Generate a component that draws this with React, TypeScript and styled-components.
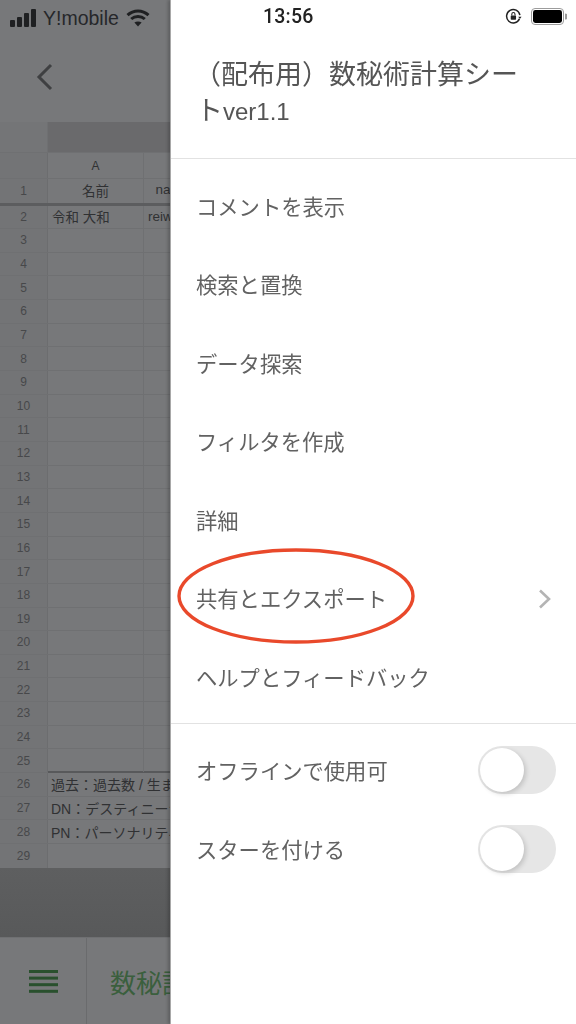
import React from "react";
import styled, { createGlobalStyle } from "styled-components";

const Global = createGlobalStyle`
  html, body { margin: 0; padding: 0; background: #fff; }
  * { box-sizing: border-box; }
`;

const FONT = `"Liberation Sans", "Noto Sans CJK JP", sans-serif`;

const Page = styled.div`
  position: relative;
  width: 576px;
  height: 1024px;
  display: flex;
  overflow: hidden;
  font-family: ${FONT};
  filter: blur(0.4px);
`;

const Behind = styled.div`
  width: 170px;
  flex: none;
  height: 1024px;
  display: flex;
  flex-direction: column;
  overflow: hidden;
  background: #77787a;
`;

const LeftStatus = styled.div`
  height: 32px;
  padding: 4px 0 0 10px;
  display: flex;
  align-items: center;
  gap: 7px;
  font-size: 19.5px;
  color: #26272a;
`;

const Toolbar = styled.div`
  height: 90px;
  padding: 0 0 0 36px;
  display: flex;
  align-items: center;
`;

const SheetBand = styled.div`
  height: 31px;
  display: grid;
  grid-template-columns: 48px 1fr;
  border-bottom: 1px solid #6f7072;
`;

const BandCorner = styled.div`
  background: #747577;
  border-right: 1px solid #6f7072;
`;

const BandFill = styled.div`
  background: #6a6a6c;
`;

const Sheet = styled.div`
  display: flex;
  flex-direction: column;
  height: 715px;
  overflow: hidden;
`;

const SheetRow = styled.div<{ $h: number; $line?: string }>`
  flex: none;
  height: ${(p) => p.$h}px;
  display: grid;
  grid-template-columns: 48px 96px 96px;
  border-bottom: ${(p) => p.$line ?? "1px solid #6f7072"};
`;

const RowHead = styled.div`
  display: flex;
  align-items: center;
  justify-content: center;
  background: #737476;
  border-right: 1px solid #6c6d6f;
  color: #47484a;
  font-size: 12px;
`;

const Cell = styled.div<{ $center?: boolean; $size?: number; $wide?: boolean; $up?: number; $rule?: boolean }>`
  display: flex;
  align-items: center;
  justify-content: ${(p) => (p.$center ? "center" : "flex-start")};
  padding: 0 ${(p) => (p.$center ? 0 : 4)}px ${(p) => p.$up ?? 0}px;
  border-right: 1px solid #6f7072;
  font-size: ${(p) => p.$size ?? 13.5}px;
  color: #303133;
  white-space: nowrap;
  overflow: hidden;
  ${(p) => p.$wide && "grid-column: 2 / 4; border-right: 0; padding-left: 3px; font-size: 14px;"}
  ${(p) => p.$rule && "box-shadow: inset 0 -1px 0 #58595b, 0 1px 0 #58595b;"}
`;

const DarkBand = styled.div`
  height: 70px;
  flex: none;
  background: linear-gradient(#5e5f60, #58595a);
  border-bottom: 1px solid #6f7072;
`;

const BottomBar = styled.div`
  flex: 1;
  display: flex;
  background: #77787a;
`;

const MenuCell = styled.div`
  width: 87px;
  flex: none;
  display: flex;
  align-items: center;
  justify-content: center;
  border-right: 1px solid #6a6b6d;
`;

const SheetName = styled.div`
  padding-left: 23px;
  display: flex;
  align-items: center;
  font-size: 26px;
  color: #3a5f3d;
  white-space: nowrap;
`;

const Drawer = styled.div`
  flex: 1;
  position: relative;
  background: #fff;
  border-left: 1px solid #a8a8a8;
  box-shadow: -2px 0 3px rgba(0, 0, 0, 0.22);
  display: flex;
  flex-direction: column;
`;

const RightStatus = styled.div`
  height: 32px;
  padding: 0 9px 0 92px;
  display: flex;
  align-items: center;
  font-size: 19.5px;
  color: #222;
`;

const Clock = styled.span`
  font-family: Roboto, sans-serif;
  font-weight: 500;
  letter-spacing: 0.2px;
  flex: 1;
`;

const StatusIcons = styled.div`
  display: flex;
  align-items: center;
  gap: 9px;
`;

const Title = styled.h1`
  margin: 0;
  padding: 23px 40px 0 25px;
  height: 127px;
  font-size: 27px;
  line-height: 36px;
  font-weight: 400;
  color: #555;
  font-family: "Noto Sans CJK JP", sans-serif;
  text-indent: -2px;
  border-bottom: 1px solid #e2e2e2;
`;

const TitleLatin = styled.span`
  font-family: "Liberation Sans", sans-serif;
  font-size: 24px;
`;

const MenuList = styled.div`
  padding: 8px 0 6px;
  border-bottom: 1px solid #e2e2e2;
`;

const RowLabel = styled.span`
  position: relative;
  top: -1px;
`;

const MenuRow = styled.div`
  height: 78.5px;
  padding: 0 24px 0 25px;
  display: flex;
  align-items: center;
  justify-content: space-between;
  font-family: "Noto Sans CJK JP", sans-serif;
  font-size: 21.3px;
  color: #626262;
`;

const ToggleList = styled.div`
  padding-top: 7px;
`;

const ToggleRow = styled.div`
  height: 79px;
  padding: 0 20px 0 25px;
  display: flex;
  align-items: center;
  justify-content: space-between;
  font-family: "Noto Sans CJK JP", sans-serif;
  font-size: 21.3px;
  color: #626262;
`;

const Toggle = styled.div`
  position: relative;
  width: 78px;
  height: 48px;
  border-radius: 24px;
  background: #e6e6e6;
`;

const Knob = styled.div`
  position: absolute;
  left: 2px;
  top: 2px;
  width: 44px;
  height: 44px;
  border-radius: 50%;
  background: #fff;
  box-shadow: 2px 2px 5px rgba(0, 0, 0, 0.16);
`;

const Annotation = styled.svg`
  position: absolute;
  left: 176px;
  top: 547px;
  pointer-events: none;
`;

const Signal = () => (
  <svg width="26" height="18" viewBox="0 0 26 18" fill="#1f2022">
    <rect x="0" y="11" width="5" height="7" rx="1" />
    <rect x="7" y="8" width="5" height="10" rx="1" />
    <rect x="14" y="4" width="5" height="14" rx="1" />
    <rect x="21" y="0" width="5" height="18" rx="1" />
  </svg>
);

const Wifi = () => (
  <svg width="24" height="18" viewBox="0 0 24 18" fill="none" stroke="#1f2022" strokeWidth="3">
    <path d="M1.5 6.2 C7.5 0.6 16.5 0.6 22.5 6.2" />
    <path d="M5.2 10 C9 6.5 15 6.5 18.8 10" />
    <path d="M12 17.6 L8.4 13.6 C10.4 12 13.6 12 15.6 13.6 Z" fill="#1f2022" stroke="none" />
  </svg>
);

const Back = () => (
  <svg width="18" height="28" viewBox="0 0 18 28" fill="none" stroke="#3f4042" strokeWidth="3">
    <path d="M15 2 L3 14 L15 26" />
  </svg>
);

const RotationLock = () => (
  <svg width="17" height="17" viewBox="0 0 16 16" fill="none" stroke="#222" strokeWidth="1.4">
    <path d="M13.6 10.2 A6.3 6.3 0 1 1 14 6.6" />
    <path d="M12.4 8.2 L15.6 8.2 L14 10.4 Z" fill="#222" stroke="none" />
    <rect x="5.4" y="7" width="5" height="4" rx="0.6" fill="#222" stroke="none" />
    <path d="M6.4 7 V5.8 a1.5 1.5 0 0 1 3 0 V7" strokeWidth="1" />
  </svg>
);

const Battery = () => (
  <svg width="36" height="17" viewBox="0 0 36 17">
    <rect x="0.5" y="0.5" width="32" height="16" rx="3.5" fill="none" stroke="#9c9c9c" />
    <rect x="2" y="2" width="29" height="13" rx="2.4" fill="#000" />
    <path d="M34 5.5 a3 3 0 0 1 0 6 Z" fill="#9c9c9c" />
  </svg>
);

const Hamburger = () => (
  <svg width="29" height="23" viewBox="0 0 29 23" fill="#29502d">
    <rect x="0" y="0" width="29" height="3" />
    <rect x="0" y="6.6" width="29" height="3" />
    <rect x="0" y="13.2" width="29" height="3" />
    <rect x="0" y="19.8" width="29" height="3" />
  </svg>
);

const Chevron = () => (
  <svg width="14" height="20" viewBox="0 0 14 20" fill="none" stroke="#b4b4b4" strokeWidth="2.6">
    <path d="M2 1.5 L11 10 L2 18.5" />
  </svg>
);

const menu = [
  "コメントを表示",
  "検索と置換",
  "データ探索",
  "フィルタを作成",
  "詳細",
  "共有とエクスポート",
  "ヘルプとフィードバック",
];

const plainRows = Array.from({ length: 23 }, (_, i) => i + 3);

export default function App() {
  return (
    <Page>
      <Global />
      <Behind>
        <LeftStatus>
          <Signal />
          <span>Y!mobile</span>
          <Wifi />
        </LeftStatus>
        <Toolbar>
          <Back />
        </Toolbar>
        <SheetBand>
          <BandCorner />
          <BandFill />
        </SheetBand>
        <Sheet>
          <SheetRow $h={26}>
            <RowHead />
            <Cell $center $size={12}>A</Cell>
            <Cell />
          </SheetRow>
          <SheetRow $h={27} $line="3px solid #5c5d5f">
            <RowHead>1</RowHead>
            <Cell $center $up={3}>名前</Cell>
            <Cell $up={3}>&nbsp;&nbsp;name</Cell>
          </SheetRow>
          <SheetRow $h={23}>
            <RowHead>2</RowHead>
            <Cell $up={2}>令和 大和</Cell>
            <Cell $up={2}>reiwa</Cell>
          </SheetRow>
          {plainRows.map((n) => (
            <SheetRow key={n} $h={23.67}>
              <RowHead>{n}</RowHead>
              <Cell $rule={n === 25} />
              <Cell $rule={n === 25} />
            </SheetRow>
          ))}
          <SheetRow $h={23.67}>
            <RowHead>26</RowHead>
            <Cell $wide>過去：過去数 / 生まれ</Cell>
          </SheetRow>
          <SheetRow $h={23.67}>
            <RowHead>27</RowHead>
            <Cell $wide>DN：デスティニーナンバー</Cell>
          </SheetRow>
          <SheetRow $h={23.67}>
            <RowHead>28</RowHead>
            <Cell $wide>PN：パーソナリティナンバー</Cell>
          </SheetRow>
          <SheetRow $h={23.67} $line="0">
            <RowHead>29</RowHead>
            <Cell $wide />
          </SheetRow>
        </Sheet>
        <DarkBand />
        <BottomBar>
          <MenuCell>
            <Hamburger />
          </MenuCell>
          <SheetName>数秘計算シート</SheetName>
        </BottomBar>
      </Behind>
      <Drawer>
        <RightStatus>
          <Clock>13:56</Clock>
          <StatusIcons>
            <RotationLock />
            <Battery />
          </StatusIcons>
        </RightStatus>
        <Title>
          （配布用）数秘術計算シート<TitleLatin>ver1.1</TitleLatin>
        </Title>
        <MenuList>
          {menu.map((m, i) => (
            <MenuRow key={m}>
              <RowLabel>{m}</RowLabel>
              {i === 5 && <Chevron />}
            </MenuRow>
          ))}
        </MenuList>
        <ToggleList>
          {["オフラインで使用可", "スターを付ける"].map((t) => (
            <ToggleRow key={t}>
              <RowLabel>{t}</RowLabel>
              <Toggle>
                <Knob />
              </Toggle>
            </ToggleRow>
          ))}
        </ToggleList>
      </Drawer>
      <Annotation width="242" height="100" viewBox="0 0 242 100">
        <ellipse cx="120" cy="49" rx="117" ry="46" fill="none" stroke="#e9492b" strokeWidth="3.4" />
      </Annotation>
    </Page>
  );
}
